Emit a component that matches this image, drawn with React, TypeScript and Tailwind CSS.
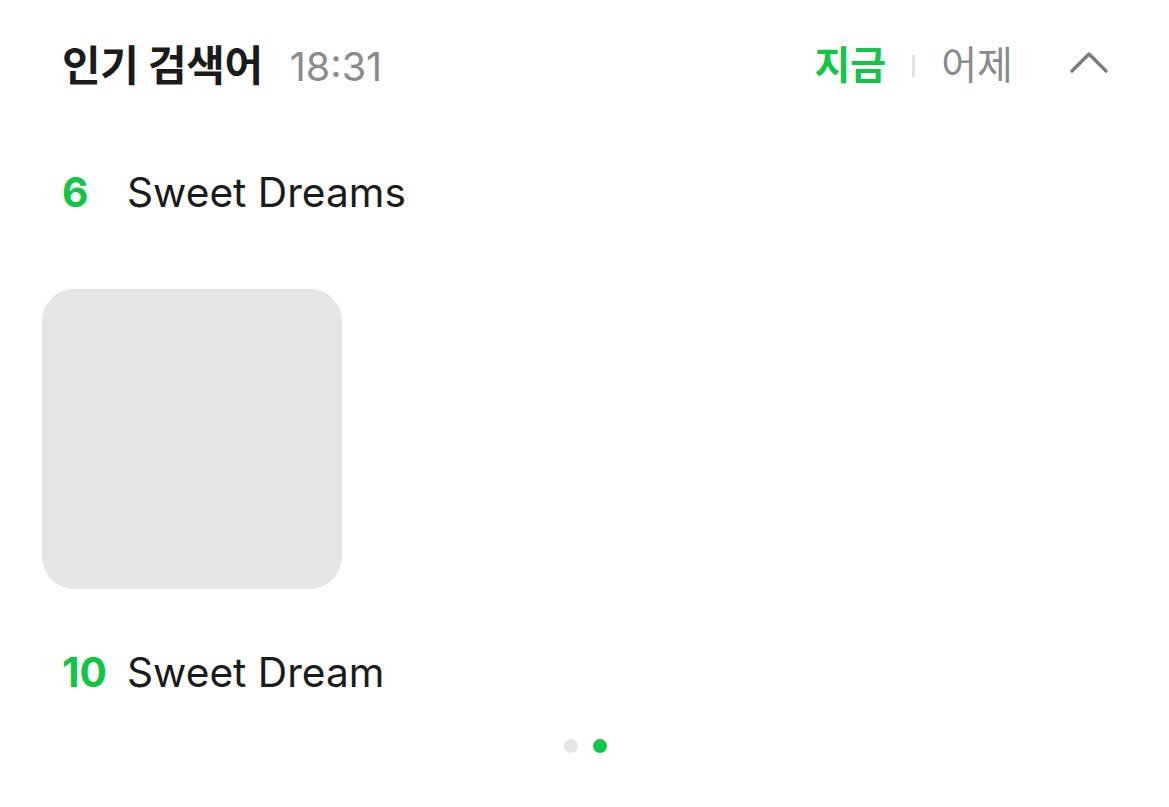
const items = [
  { rank: 6, text: "Sweet Dreams" },
  { rank: 10, text: "Sweet Dream" },
];

export default function App() {
  return (
    <div
      className="w-[1169px] h-[807px] bg-white text-[#1b1b1b] overflow-hidden"
      style={{ fontFamily: '"Inter", "Noto Sans CJK KR", sans-serif' }}
    >
      <header className="flex items-center justify-between pl-[62px] pr-[60px] pt-[36px] h-[95px]">
        <div className="flex items-baseline gap-[27px]">
          <h1 className="text-[42px] font-bold tracking-[-0.4px]">인기 검색어</h1>
          <span className="text-[39.5px] text-[#8b8b8b]">18:31</span>
        </div>
        <div className="flex items-center">
          <button className="text-[39px] font-bold text-[#12c447]">지금</button>
          <span className="mx-[26px] h-[22px] w-[3px] bg-[#e3e3e3]" />
          <button className="text-[39px] text-[#8a8a8a]">어제</button>
          <svg className="ml-[56px] -mt-[8px]" width="40" height="24" viewBox="0 0 40 24" fill="none">
            <path d="M3 21 L20 4 L37 21" stroke="#7d7d7d" strokeWidth="3.5" strokeLinecap="round" strokeLinejoin="round" />
          </svg>
        </div>
      </header>

      <div className="flex items-center pl-[62px] mt-[52px] h-[92px]">
        <span className="w-[65px] text-[40.7px] font-bold text-[#12c447]">{items[0].rank}</span>
        <span className="text-[40.7px]">{items[0].text}</span>
      </div>

      <div className="pl-[42px] mt-[50px]">
        <div className="w-[300px] h-[300px] rounded-[32px] bg-[#e5e6e8] border border-[#e2e3e5]" />
      </div>

      <div className="flex items-center pl-[62px] mt-[49px] h-[70px]">
        <span className="w-[65px] text-[40.7px] font-bold text-[#12c447]">{items[1].rank}</span>
        <span className="text-[40.7px]">{items[1].text}</span>
      </div>

      <div className="flex justify-center gap-[15px] mt-[31px] pl-[2px]">
        <span className="w-[14px] h-[14px] rounded-full bg-[#e6e6e6]" />
        <span className="w-[14px] h-[14px] rounded-full bg-[#12c447]" />
      </div>
    </div>
  );
}
